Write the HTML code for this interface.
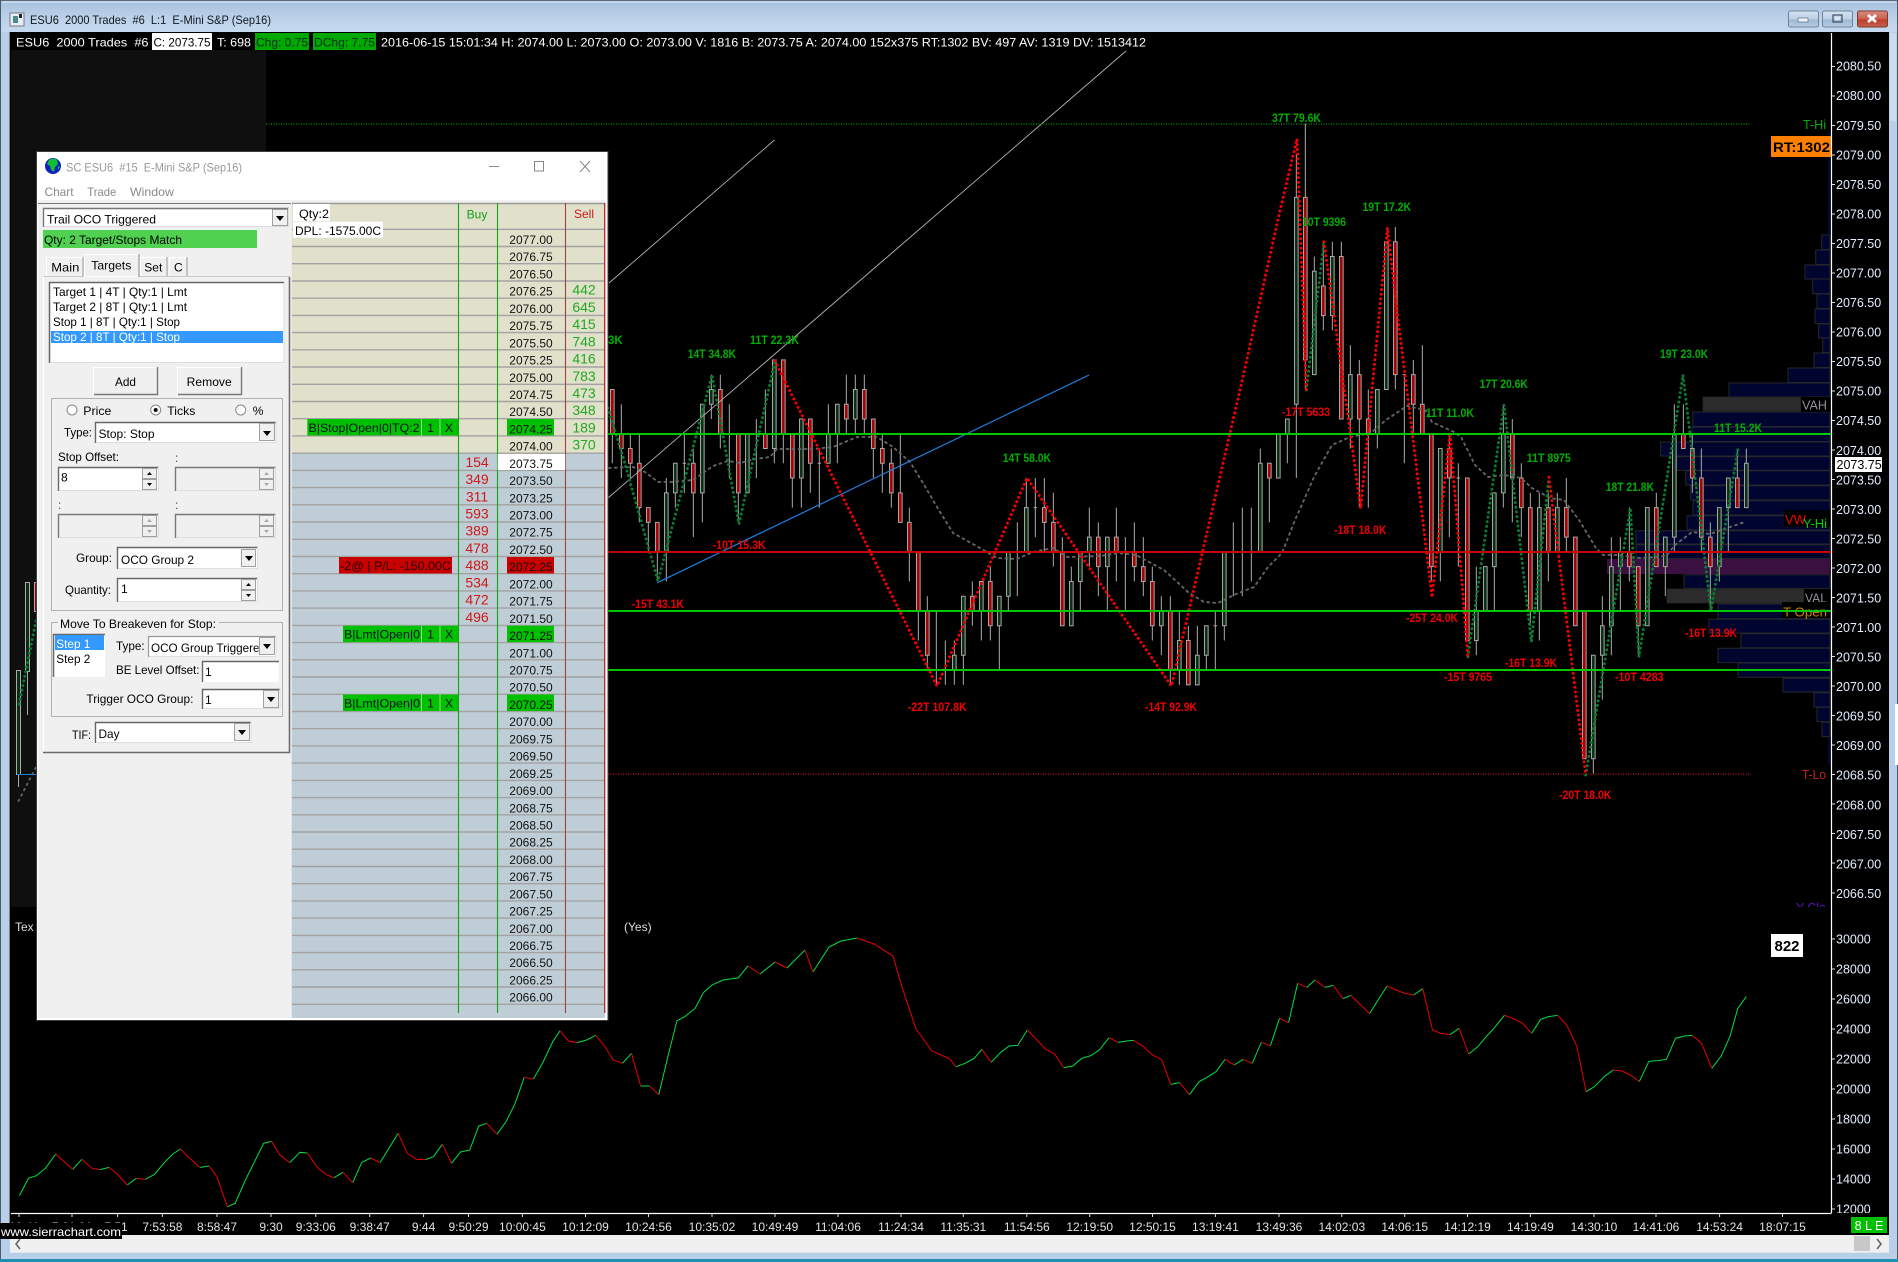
<!DOCTYPE html>
<html><head><meta charset="utf-8"><title>ESU6 2000 Trades</title>
<style>
html,body{margin:0;padding:0;background:#000;overflow:hidden}
svg{display:block}
text{font-family:"Liberation Sans",sans-serif;white-space:pre;font-size:12px}
.lb text{font-weight:bold;font-size:11.5px}
.g{fill:#00b000}.r{fill:#f00000}
.ns{vector-effect:non-scaling-stroke}
.btn{fill:#f0f0f0;stroke:#a0a0a0;stroke-width:1}
.ax text{font-size:12.5px}
.v text{font-size:14px}
.m{font-size:13px}
</style></head><body>
<svg xmlns="http://www.w3.org/2000/svg" width="1898" height="1262" viewBox="0 0 1898 1262">
<defs>
<linearGradient id="tb" x1="0" y1="0" x2="0" y2="1"><stop offset="0" stop-color="#a6c0dc"/><stop offset=".6" stop-color="#bcd2e9"/><stop offset="1" stop-color="#c6d9ee"/></linearGradient>
<linearGradient id="bt" x1="0" y1="0" x2="0" y2="1"><stop offset="0" stop-color="#d5e3f2"/><stop offset=".5" stop-color="#bcd0e6"/><stop offset=".55" stop-color="#9fb9d6"/><stop offset="1" stop-color="#b8cde4"/></linearGradient>
<linearGradient id="cl" x1="0" y1="0" x2="0" y2="1"><stop offset="0" stop-color="#dc8a7c"/><stop offset=".5" stop-color="#c8604f"/><stop offset=".55" stop-color="#b8402c"/><stop offset="1" stop-color="#c8604c"/></linearGradient>
<clipPath id="c1"><rect x="0" y="0" width="1898" height="1213"/></clipPath>
<clipPath id="c2"><rect x="1700" y="890" width="198" height="17"/></clipPath>
<clipPath id="c3"><rect x="148" y="636" width="110.5" height="20"/></clipPath>
</defs>

<!-- window frame -->
<rect width="1898" height="1262" fill="#b7cfe9"/>
<rect width="1898" height="32" fill="url(#tb)"/>
<path d="M0 .5H1898" stroke="#5a6a7c" stroke-width="1"/>
<path d="M.5 0V1262" stroke="#4a5a6c" stroke-width="1"/>
<path d="M1897.5 0V1262" stroke="#4a5a6c" stroke-width="1"/>
<path d="M2 2H1896" stroke="#e0ebf6" stroke-width="1"/>
<rect x="1890" y="33" width="6" height="88" fill="#cbdcef"/>
<rect x="1895" y="704" width="3" height="61" fill="#fff"/>
<rect x="0" y="1259" width="1898" height="3" fill="#1f8fb0"/>
<!-- title -->
<rect x="10" y="13" width="14" height="13" fill="#e8eef4" stroke="#778" stroke-width="1"/><rect x="13" y="16" width="5" height="7" fill="#4a8a8a"/><rect x="19" y="14" width="3" height="4" fill="#223"/>
<text x="30" y="24" textLength="241" lengthAdjust="spacingAndGlyphs" fill="#101820">ESU6  2000 Trades  #6  L:1  E-Mini S&amp;P (Sep16)</text>
<rect x="1788.5" y="11" width="30" height="16" rx="2" fill="url(#bt)" stroke="#6f8299"/>
<rect x="1822.5" y="11" width="30" height="16" rx="2" fill="url(#bt)" stroke="#6f8299"/>
<rect x="1857.5" y="11" width="30" height="16" rx="2" fill="url(#cl)" stroke="#7a3a30"/>
<rect x="1798" y="18" width="10" height="4" fill="#eef3f9" stroke="#5a6c80" stroke-width=".7"/>
<rect x="1833" y="15" width="9" height="7" fill="none" stroke="#3e4e60" stroke-width="1.2"/><rect x="1835" y="17" width="5" height="3" fill="#dde8f3"/>
<path d="M1868 15l8 7M1876 15l-8 7" stroke="#fff" stroke-width="2.8"/>

<!-- chart base -->
<rect x="9" y="32" width="1880" height="1203" fill="#000"/>
<path d="M9.5 32V1235" stroke="#ffffff" stroke-width="1" opacity=".5"/>
<rect x="11" y="50" width="255" height="857" fill="#0f0f0f"/>

<!-- volume profile -->
<rect x="1828" y="132" width="2" height="103" fill="#000a3a"/>
<g fill="#00052f" stroke="#26262e" stroke-width="1">
<path d="M1821.7 235H1830V249.5H1821.7zM1815.7 250H1830V264.5H1815.7zM1805 265H1830V279H1805zM1812.7 279H1830V293.5H1812.7zM1817 294H1830V308.5H1817zM1815 309H1830V323.5H1815zM1818.7 324H1830V338H1818.7zM1822.7 338H1830V352.5H1822.7zM1814 353H1830V367.5H1814zM1788 368H1830V382.5H1788zM1729 383H1830V397H1729zM1692.7 412H1830V426.5H1692.7zM1692 427H1830V441.5H1692zM1660.7 442H1830V456H1660.7zM1676.7 456.7H1830V470.2H1676.7zM1685.7 470.7H1830V485H1685.7zM1690.7 485.7H1830V500H1690.7zM1693 500.7H1830V515H1693zM1687 515.7H1830V530H1687zM1636 530.7H1830V544H1636zM1636 544.7H1830V558.6H1636zM1684 574.7H1830V588.4H1684zM1718 604H1830V618.7H1718zM1709 619.3H1830V633H1709zM1741 633.7H1830V647.7H1741zM1718 648.3H1830V662.6H1718zM1738 663H1830V677.3H1738zM1783 678.3H1830V692H1783zM1814 692.7H1830V707H1814zM1817 707.3H1830V721.6H1817zM1822 722.3H1830V736.6H1822z"/>
</g>
<rect x="1828" y="737" width="2" height="28" fill="#000a3a"/>
<rect x="1607" y="559" width="223" height="15" fill="#3a1040"/>
<rect x="1703" y="397" width="98" height="14" fill="#2c2c2c" stroke="#222"/>
<rect x="1667" y="589" width="137" height="14" fill="#2c2c2c" stroke="#222"/>

<!-- left strip candles -->
<path d="M27.5 671V715M18.5 774V787" stroke="#aaa" stroke-width="1"/>
<rect x="25.5" y="582.5" width="4" height="89" fill="#0a2e12" stroke="#aaa"/>
<rect x="16.5" y="670.5" width="4" height="104" fill="#0a2e12" stroke="#aaa"/>
<rect x="34.5" y="582.5" width="4" height="29" fill="#a00000" stroke="#aaa"/>
<path d="M36 621L19 705" stroke="#0a7a30" stroke-width="3" stroke-dasharray=".1 4.6" stroke-linecap="round"/>
<path d="M36 767L18 802" stroke="#666" stroke-width="1.8" stroke-dasharray="3 3"/>
<path d="M17 774.5H37" stroke="#1e7fe0" stroke-width="1"/>

<!-- candles: x=i, y=tick -->
<g transform="translate(612.33 64.5) scale(9 14.77)" fill="none">
<path class="ns" stroke="#aaa" stroke-width="1" d="M0 22V27M1 23V28M2 25V28M3 25V31M4 30V33M5 31V35M6 28V35M7 27V30M8 25V29M7.8 27H8.2M9 26V32M10 23V31M11 21V24M12 21V26M13 23V28M14 25V31M15 25V29M16 24V28M17 22V26M18 20V27M19 20V27M20 25V30M21 24V30M22 24V29M23 26V30M22.8 27H23.2M24 23V27M25 23V27M26 21V25M27 21V25M28 21V25M29 24V28M30 25V29M31 26V30M32 25V31M33 30V35M34 33V39M35 36V41M36 37V42M37 39V42M38 39V42M39 36V42M40 35V38M41 35V39M42 34V39M43 36V41M44 33V37M45 31V36M46 28V33M47 28V32M46.8 30H47.2M48 28V33M49 29V34M50 32V38M51 34V38M52 33V37M53 30V34M54 31V36M55 32V37M56 30V35M57 32V37M58 31V35M59 32V36M60 34V39M61 36V40M62 36V42M63 37V42M64 38V42M65 38V42M66 38V41M67 37V41M66.8 38H67.2M68 33V39M69 31V36M70 30V36M71 30V35M72 26V33M73 27V31M74 25V28M75 24V27M76 6V28M77 4V22M78 13V21M79 12V18M80 12V18M81 12V24M82 19V26M83 20V30M84 22V30M85 22V26M86 12V22M87 11V22M88 21V27M87.8 21H88.2M89 20V25M90 19V25M91 25V35M92 26V35M93 25V32M94 27V34M93.8 28H94.2M95 28V39M96 34V40M97 34V37M98 29V37M99 23V30M100 24V31M101 27V32M102 29V38M103 29V39M104 29V35M105 29V33M106 28V33M107 32V38M108 37V47M109 40V48M110 36V43M111 32V40M112 32V37M113 30V35M114 34V40M115 30V38M116 29V34M117 32V36M118 23V33M119 23V26M120 25V29M121 26V33M122 31V37M123 30V35M124 28V33M125 26V30M126 26V30"/>
<path class="ns" stroke="#aaa" stroke-width="1" fill="#a80000" d="M-.2 22h.4V25h-.4zM.8 25h.4V26h-.4zM1.8 26h.4V27h-.4zM2.8 27h.4V30h-.4zM3.8 30h.4V31h-.4zM4.8 31h.4V33h-.4zM8.8 27h.4V29h-.4zM11.8 22h.4V25h-.4zM13.8 25h.4V29h-.4zM16.8 25h.4V26h-.4zM18.8 20h.4V25h-.4zM19.8 25h.4V28h-.4zM21.8 24h.4V27h-.4zM25.8 23h.4V24h-.4zM27.8 22h.4V24h-.4zM28.8 24h.4V26h-.4zM29.8 26h.4V27h-.4zM30.8 27h.4V29h-.4zM31.8 29h.4V31h-.4zM32.8 31h.4V33h-.4zM33.8 33h.4V37h-.4zM34.8 37h.4V40h-.4zM39.8 36h.4V37h-.4zM41.8 35h.4V38h-.4zM47.8 30h.4V31h-.4zM48.8 31h.4V33h-.4zM49.8 33h.4V38h-.4zM53.8 32h.4V34h-.4zM55.8 32h.4V33h-.4zM57.8 33h.4V34h-.4zM58.8 34h.4V35h-.4zM59.8 35h.4V38h-.4zM61.8 37h.4V41h-.4zM63.8 39h.4V42h-.4zM72.8 27h.4V28h-.4zM76.8 9h.4V20h-.4zM78.8 15h.4V17h-.4zM80.8 13h.4V24h-.4zM82.8 21h.4V24h-.4zM83.8 24h.4V25h-.4zM86.8 12h.4V21h-.4zM88.8 21h.4V23h-.4zM89.8 23h.4V25h-.4zM90.8 25h.4V34h-.4zM92.8 26h.4V28h-.4zM94.8 28h.4V39h-.4zM99.8 25h.4V28h-.4zM100.8 28h.4V30h-.4zM101.8 30h.4V37h-.4zM103.8 30h.4V33h-.4zM105.8 30h.4V32h-.4zM106.8 32h.4V38h-.4zM107.8 37h.4V47h-.4zM112.8 33h.4V34h-.4zM113.8 34h.4V38h-.4zM115.8 30h.4V34h-.4zM118.8 25h.4V26h-.4zM119.8 26h.4V28h-.4zM120.8 28h.4V32h-.4zM121.8 32h.4V34h-.4zM124.8 28h.4V30h-.4z"/>
<path class="ns" stroke="#aaa" stroke-width="1" fill="#0a2e12" d="M5.8 29h.4V33h-.4zM6.8 27h.4V29h-.4zM9.8 23h.4V29h-.4zM10.8 22h.4V23h-.4zM14.8 25h.4V29h-.4zM17.8 20h.4V26h-.4zM20.8 24h.4V28h-.4zM23.8 25h.4V27h-.4zM24.8 23h.4V25h-.4zM26.8 22h.4V24h-.4zM37.8 40h.4V41h-.4zM38.8 36h.4V40h-.4zM40.8 35h.4V37h-.4zM42.8 36h.4V38h-.4zM43.8 33h.4V36h-.4zM45.8 30h.4V33h-.4zM50.8 35h.4V38h-.4zM51.8 33h.4V35h-.4zM52.8 32h.4V33h-.4zM54.8 32h.4V34h-.4zM60.8 37h.4V38h-.4zM62.8 39h.4V41h-.4zM64.8 40h.4V42h-.4zM65.8 38h.4V40h-.4zM67.8 33h.4V38h-.4zM71.8 27h.4V33h-.4zM73.8 25h.4V28h-.4zM74.8 24h.4V25h-.4zM75.8 9h.4V23h-.4zM77.8 14h.4V21h-.4zM79.8 13h.4V17h-.4zM81.8 21h.4V24h-.4zM84.8 22h.4V25h-.4zM85.8 12h.4V22h-.4zM91.8 26h.4V33h-.4zM95.8 37h.4V39h-.4zM96.8 34h.4V37h-.4zM97.8 29h.4V34h-.4zM98.8 25h.4V29h-.4zM102.8 30h.4V37h-.4zM104.8 30h.4V33h-.4zM108.8 40h.4V47h-.4zM109.8 38h.4V40h-.4zM110.8 34h.4V38h-.4zM111.8 33h.4V34h-.4zM114.8 30h.4V38h-.4zM116.8 32h.4V34h-.4zM117.8 25h.4V32h-.4zM122.8 30h.4V34h-.4zM123.8 28h.4V30h-.4zM125.8 27h.4V30h-.4z"/>
</g>

<!-- MA grey dashed -->
<path fill="none" stroke="#666" stroke-width="1.8" stroke-dasharray="3.5 2.5" d="M608 468L633 467 645 472 658 482 672 482 693 480 703 473 713 466 728 461 740 463 755 459 770 457 777 449 793 449 813 449 833 447 857 437 877 437 893 447 910 462 923 483 937 507 953 533 980 548 997 558 1017 559 1033 552 1053 548 1067 557 1100 556 1118 553 1136 555 1164 570 1175 580 1189 593 1204 602 1218 603 1236 594 1254 587 1268 567 1282 553 1295 520 1304 500 1314 477 1332 445 1350 437 1371 433 1386 420 1407 406 1425 410 1432 422 1454 432 1461 437 1475 465 1488 477 1504 475 1521 478 1532 488 1550 498 1564 500 1579 520 1596 548 1603 555 1618 555 1636 558 1659 557 1667 555 1675 545 1692 532 1710 534 1727 528 1745 522"/>

<!-- trend lines -->
<path d="M609 283L774.5 140M608 498L1126 51" stroke="#b4b4b4" stroke-width=".9" fill="none"/>
<path d="M657.3 582.7L1089 375" stroke="#1e7fe0" stroke-width="1.2" fill="none"/>

<!-- zigzags -->
<path fill="none" stroke="#0a7a30" stroke-width="3" stroke-dasharray=".1 4.6" stroke-linecap="round" d="M608 408L623 457 658 581 712 375 739 524 775 361M1306.4 390L1324 241.7M1467.9 656.7L1504 405 1531.4 641.7 1549 477.3M1585.7 775L1630.4 508.3 1639 656.7 1683 375 1711 610.7 1738 449.3"/>
<path fill="none" stroke="#f00000" stroke-width="3" stroke-dasharray=".1 4.6" stroke-linecap="round" d="M775 361L937 686 1027 478 1171.4 686 1210.7 516.7 1243 377 1278.6 216.7 1297 139 1305.4 366.7 1306.4 390M1324 241.7L1360.7 508.3 1387.5 227.7 1395.7 300 1414 446.7 1432 597.3 1450 433 1467.9 656.7M1549 477.3L1585.7 775"/>

<!-- horizontal lines -->
<path d="M266 124H1751" stroke="#00c000" stroke-width="1" stroke-dasharray="1 1.5"/>
<path d="M608 774H1751" stroke="#f02020" stroke-width="1" stroke-dasharray="1 1.5"/>
<path d="M266 434H1831M266 611H1831M266 670H1831" stroke="#00c800" stroke-width="2"/>
<path d="M266 552H1831" stroke="#c80000" stroke-width="2"/>

<!-- chart labels -->
<g class="lb">
<text class="g" x="1272" y="122" textLength="49" lengthAdjust="spacingAndGlyphs">37T 79.6K</text>
<text class="g" x="1302" y="226" textLength="44" lengthAdjust="spacingAndGlyphs">10T 9396</text>
<text class="g" x="1362.5" y="211" textLength="48.5" lengthAdjust="spacingAndGlyphs">19T 17.2K</text>
<text class="g" x="1479.6" y="388" textLength="48.3" lengthAdjust="spacingAndGlyphs">17T 20.6K</text>
<text class="g" x="1425.7" y="417" textLength="48.3" lengthAdjust="spacingAndGlyphs">11T 11.0K</text>
<text class="g" x="1526.8" y="462" textLength="44" lengthAdjust="spacingAndGlyphs">11T 8975</text>
<text class="g" x="1605.7" y="491" textLength="48.3" lengthAdjust="spacingAndGlyphs">18T 21.8K</text>
<text class="g" x="1660" y="358" textLength="48" lengthAdjust="spacingAndGlyphs">19T 23.0K</text>
<text class="g" x="1714" y="432" textLength="48" lengthAdjust="spacingAndGlyphs">11T 15.2K</text>
<text class="g" x="687.7" y="358" textLength="48.3" lengthAdjust="spacingAndGlyphs">14T 34.8K</text>
<text class="g" x="750" y="344" textLength="49" lengthAdjust="spacingAndGlyphs">11T 22.3K</text>
<text class="g" x="1002.7" y="462" textLength="48.3" lengthAdjust="spacingAndGlyphs">14T 58.0K</text>
<text class="g" x="608" y="344">3K</text>
<text class="r" x="631.7" y="608" textLength="52.3" lengthAdjust="spacingAndGlyphs">-15T 43.1K</text>
<text class="r" x="712.7" y="549" textLength="53" lengthAdjust="spacingAndGlyphs">-10T 15.3K</text>
<text class="r" x="907.7" y="711" textLength="59" lengthAdjust="spacingAndGlyphs">-22T 107.8K</text>
<text class="r" x="1282" y="416" textLength="48" lengthAdjust="spacingAndGlyphs">-17T 5633</text>
<text class="r" x="1334" y="534" textLength="52.4" lengthAdjust="spacingAndGlyphs">-18T 18.0K</text>
<text class="r" x="1406" y="622" textLength="52" lengthAdjust="spacingAndGlyphs">-25T 24.0K</text>
<text class="r" x="1505" y="667" textLength="52" lengthAdjust="spacingAndGlyphs">-16T 13.9K</text>
<text class="r" x="1444" y="681" textLength="48" lengthAdjust="spacingAndGlyphs">-15T 9765</text>
<text class="r" x="1615" y="681" textLength="48.6" lengthAdjust="spacingAndGlyphs">-10T 4283</text>
<text class="r" x="1145" y="711" textLength="52" lengthAdjust="spacingAndGlyphs">-14T 92.9K</text>
<text class="r" x="1559" y="799" textLength="52.4" lengthAdjust="spacingAndGlyphs">-20T 18.0K</text>
<text class="r" x="1685" y="637" textLength="52" lengthAdjust="spacingAndGlyphs">-16T 13.9K</text>
</g>

<!-- right overlay labels -->
<text class="m" x="1803" y="129" fill="#00b000" textLength="23" lengthAdjust="spacingAndGlyphs">T-Hi</text>
<rect x="1771" y="136" width="60" height="21" fill="#ff8000"/>
<text x="1773" y="152" style="font-weight:bold;font-size:14px" fill="#000" textLength="57" lengthAdjust="spacingAndGlyphs">RT:1302</text>
<rect x="1801" y="397" width="29" height="15" fill="#000"/>
<text class="m" x="1802" y="409.5" fill="#909098" textLength="25" lengthAdjust="spacingAndGlyphs">VAH</text>
<rect x="1804" y="589" width="26" height="15" fill="#000"/>
<text class="m" x="1805" y="602.5" fill="#909098" textLength="22" lengthAdjust="spacingAndGlyphs">VAL</text>
<rect x="1784" y="510" width="46" height="17" fill="#000"/>
<text class="m" x="1785" y="524" fill="#f00000">VW</text>
<text class="m" x="1803" y="528" fill="#00d000" textLength="24" lengthAdjust="spacingAndGlyphs">Y-Hi</text>
<rect x="1782" y="602" width="48" height="8" fill="#000"/><rect x="1782" y="612" width="48" height="6" fill="#000"/>
<text class="m" x="1783" y="616.5" fill="#d08000" textLength="44" lengthAdjust="spacingAndGlyphs">T Open</text>
<path d="M1782 611H1831" stroke="#00c800" stroke-width="2"/>
<text class="m" x="1802" y="779" fill="#c82020" textLength="24" lengthAdjust="spacingAndGlyphs">T-Lo</text>
<g clip-path="url(#c2)"><text class="m" x="1796" y="912" fill="#5a10d0" textLength="30" lengthAdjust="spacingAndGlyphs">Y-Clo</text></g>

<!-- lower pane indicator -->
<text x="15" y="931" fill="#ddd">Tex</text>
<text x="624" y="931" fill="#ddd">(Yes)</text>
<g fill="none" stroke-width="1" transform="translate(0 1000) scale(.60606 .33333)">
<path class="ns" stroke="#00e040" d="M32 587L47 535 60 527 75 505 92 462M120 508L135 478M165 509L180 502M210 555L225 535M240 538L255 523 270 490 285 462 298 447M330 502L345 498M375 620L388 610 405 540 435 430 448 424M478 488L495 457 507 459M551 533L566 517M582 548L597 487 612 474M627 488L657 400M702 479L715 470 730 433M745 490L760 456 775 450 790 378 803 370M820 403L835 365 850 310 865 232M880 237L895 190 912 125 924 92M952 128L968 120 983 106M1027 190L1042 160M1057 258L1072 258M1087 284L1102 170 1117 62 1130 50 1147 25 1160 -20"/>
<path class="ns" stroke="#e80000" d="M92 462L120 508M135 478L152 505 165 509M180 502L195 525 210 555M225 535L240 538M298 447L310 470 330 502M345 498L358 530 375 620M448 424L462 465 478 488M507 459L525 505 540 525 551 533M566 517L582 548M612 474L627 488M657 400L672 460 687 478 702 479M730 433L745 490M803 370L820 403M865 232L880 237M924 92L938 123 952 128M983 106L998 140 1012 180 1027 190M1042 160L1057 258M1072 258L1087 284"/>
</g>
<path fill="none" stroke="#00e040" stroke-width="1" d="M703 993L712 985 723 980 738 978 748 966M760 974L775 962M787 968L805 950M813 972L829 947 841 941 857 938"/>
<path fill="none" stroke="#e80000" stroke-width="1" d="M748 966L760 974M775 962L787 968M805 950L813 972M857 938L874 944 893 956 902 987 916 1029 932 1051 950 1059"/>
<g fill="none" stroke-width="1" transform="translate(950 900) scale(.6046 .33333)">
<path class="ns" stroke="#00e040" d="M10 500L25 490 40 475 53 448M68 487L85 455 98 438 112 436 128 390M188 503L203 498 218 475 233 467 247 450 263 413M278 427L292 423 304 421M365 553L380 548M396 584L412 545 425 532 440 515 455 478M470 495L485 478M500 490L515 427M530 437L545 355M560 368L575 250M590 262L604 240M620 262L634 256M650 296L663 286M694 341L708 300 723 258M767 285L782 266M827 404L842 385M858 462L873 440 887 410 902 380 917 346M962 400L977 358 990 350 1005 346M1052 575L1066 560 1082 530 1097 510M1140 545L1156 484 1170 482 1185 478 1200 415 1215 408 1228 406M1260 505L1275 470 1290 410 1303 325 1317 290"/>
<path class="ns" stroke="#e80000" d="M0 478L10 500M53 448L68 487M128 390L158 447 173 462 188 503M263 413L278 427M304 421L320 440 335 465 350 478 365 553M380 548L396 584M455 478L470 495M485 478L500 490M515 427L530 437M545 355L560 368M575 250L590 262M604 240L620 262M634 256L650 296M663 286L694 341M723 258L738 270 752 280 767 285M782 266L798 390 812 400 827 404M842 385L858 462M917 346L932 356 947 370 962 400M1005 346L1020 375 1037 440 1052 575M1097 510L1112 513 1127 527 1140 545M1228 406L1243 430 1260 505"/>
</g>
<rect x="1771" y="934" width="32" height="23" fill="#fff"/>
<text x="1787" y="951" text-anchor="middle" style="font-weight:bold;font-size:15px" fill="#000">822</text>

<!-- info bar -->
<rect x="10" y="32" width="1822" height="18" fill="#000"/>
<text x="16" y="46.5" fill="#fff" textLength="132.5" lengthAdjust="spacingAndGlyphs">ESU6  2000 Trades  #6</text>
<rect x="152" y="33" width="60" height="17" fill="#fff"/>
<text x="153.5" y="46.5" fill="#000" textLength="57" lengthAdjust="spacingAndGlyphs">C: 2073.75</text>
<text x="217" y="46.5" fill="#fff" textLength="34" lengthAdjust="spacingAndGlyphs">T: 698</text>
<rect x="255" y="33" width="54" height="17" fill="#00a800"/>
<text x="256" y="46.5" fill="#032" textLength="52" lengthAdjust="spacingAndGlyphs">Chg: 0.75</text>
<rect x="313" y="33" width="63" height="17" fill="#00a800"/>
<text x="314" y="46.5" fill="#032" textLength="61" lengthAdjust="spacingAndGlyphs">DChg: 7.75</text>
<text x="381" y="46.5" fill="#fff" textLength="765" lengthAdjust="spacingAndGlyphs">2016-06-15 15:01:34 H: 2074.00 L: 2073.00 O: 2073.00 V: 1816 B: 2073.75 A: 2074.00 152x375 RT:1302 BV: 497 AV: 1319 DV: 1513412</text>

<!-- price axis -->
<path d="M1831.5 33V1213" stroke="#fff" stroke-width="1.2"/>
<path d="M1832 66.5h3M1832 96h3M1832 125.5h3M1832 155h3M1832 184.5h3M1832 214h3M1832 243.5h3M1832 273h3M1832 302.5h3M1832 332h3M1832 361.5h3M1832 391h3M1832 420.5h3M1832 450h3M1832 479.5h3M1832 509h3M1832 538.5h3M1832 568h3M1832 597.5h3M1832 627h3M1832 656.5h3M1832 686h3M1832 715.5h3M1832 745h3M1832 774.5h3M1832 804h3M1832 833.5h3M1832 863h3M1832 893h3M1832 939h3M1832 969h3M1832 999h3M1832 1029h3M1832 1059h3M1832 1089h3M1832 1119h3M1832 1149h3M1832 1179h3M1832 1209h3" stroke="#ddd" stroke-width="1"/>
<g class="ax" fill="#e4eeff">
<text x="1836" y="70.7">2080.50</text><text x="1836" y="100.2">2080.00</text><text x="1836" y="129.8">2079.50</text><text x="1836" y="159.3">2079.00</text><text x="1836" y="188.9">2078.50</text><text x="1836" y="218.4">2078.00</text><text x="1836" y="248">2077.50</text><text x="1836" y="277.5">2077.00</text><text x="1836" y="307">2076.50</text><text x="1836" y="336.6">2076.00</text><text x="1836" y="366.1">2075.50</text><text x="1836" y="395.7">2075.00</text><text x="1836" y="425.2">2074.50</text><text x="1836" y="454.8">2074.00</text><text x="1836" y="484.3">2073.50</text><text x="1836" y="513.8">2073.00</text><text x="1836" y="543.4">2072.50</text><text x="1836" y="572.9">2072.00</text><text x="1836" y="602.5">2071.50</text><text x="1836" y="632">2071.00</text><text x="1836" y="661.6">2070.50</text><text x="1836" y="691.1">2070.00</text><text x="1836" y="720.6">2069.50</text><text x="1836" y="750.2">2069.00</text><text x="1836" y="779.7">2068.50</text><text x="1836" y="809.3">2068.00</text><text x="1836" y="838.8">2067.50</text><text x="1836" y="868.4">2067.00</text><text x="1836" y="897.9">2066.50</text>
<text x="1836" y="943.7">30000</text><text x="1836" y="973.7">28000</text><text x="1836" y="1003.7">26000</text><text x="1836" y="1033.7">24000</text><text x="1836" y="1063.7">22000</text><text x="1836" y="1093.7">20000</text><text x="1836" y="1123.7">18000</text><text x="1836" y="1153.7">16000</text><text x="1836" y="1183.7">14000</text>
<g clip-path="url(#c1)"><text x="1836" y="1213.7">12000</text></g>
</g>
<rect x="1835" y="457" width="47" height="15" fill="#fff"/>
<text x="1836.5" y="469" style="font-size:12.5px" fill="#000">2073.75</text>

<!-- time axis -->
<path d="M11 1213.5H1831.5" stroke="#fff" stroke-width="1.2"/>
<path d="M19 1214v3M72 1214v3M117.6 1214v3M162.4 1214v3M217 1214v3M271 1214v3M315.8 1214v3M369.7 1214v3M423.6 1214v3M468.5 1214v3M522.4 1214v3M585.5 1214v3M648.5 1214v3M712 1214v3M775 1214v3M838 1214v3M901 1214v3M963.3 1214v3M1026.8 1214v3M1089.7 1214v3M1152.5 1214v3M1215.4 1214v3M1279 1214v3M1341.8 1214v3M1404.7 1214v3M1467.5 1214v3M1530.4 1214v3M1594 1214v3M1656 1214v3M1719.6 1214v3M1782.5 1214v3" stroke="#ddd" stroke-width="1"/>
<g fill="#e2e2e2" text-anchor="middle">
<text x="24" y="1231">10:41</text><text x="72" y="1231">7:01:01</text><text x="116" y="1231">7:51</text>
<text x="162.4" y="1231">7:53:58</text><text x="217" y="1231">8:58:47</text><text x="271" y="1231">9:30</text><text x="315.8" y="1231">9:33:06</text><text x="369.7" y="1231">9:38:47</text><text x="423.6" y="1231">9:44</text><text x="468.5" y="1231">9:50:29</text><text x="522.4" y="1231">10:00:45</text><text x="585.5" y="1231">10:12:09</text><text x="648.5" y="1231">10:24:56</text><text x="712" y="1231">10:35:02</text><text x="775" y="1231">10:49:49</text><text x="838" y="1231">11:04:06</text><text x="901" y="1231">11:24:34</text><text x="963.3" y="1231">11:35:31</text><text x="1026.8" y="1231">11:54:56</text><text x="1089.7" y="1231">12:19:50</text><text x="1152.5" y="1231">12:50:15</text><text x="1215.4" y="1231">13:19:41</text><text x="1279" y="1231">13:49:36</text><text x="1341.8" y="1231">14:02:03</text><text x="1404.7" y="1231">14:06:15</text><text x="1467.5" y="1231">14:12:19</text><text x="1530.4" y="1231">14:19:49</text><text x="1594" y="1231">14:30:10</text><text x="1656" y="1231">14:41:06</text><text x="1719.6" y="1231">14:53:24</text><text x="1782.5" y="1231">18:07:15</text>
</g>
<rect x="1851" y="1217" width="36" height="16" fill="#00c000"/>
<text x="1869" y="1230" text-anchor="middle" fill="#fff" style="font-size:12.5px">8 L E</text>
<!-- scrollbar -->
<rect x="10" y="1235" width="1879" height="17" fill="#f0f0f0"/>
<path d="M10 1252.5H1889" stroke="#dfe6ee" stroke-width="1"/>
<rect x="1854" y="1236" width="16" height="15" fill="#c8c8c8"/>
<path d="M20 1239l-4 5 4 5M1877 1239l4 5-4 5" fill="none" stroke="#666" stroke-width="1.6"/>
<rect x="0" y="1223" width="122" height="16" fill="#000"/>
<text x="1" y="1236" fill="#fff" textLength="120" lengthAdjust="spacingAndGlyphs">www.sierrachart.com</text>

<!-- DIALOG -->
<rect x="37" y="152" width="571" height="868" fill="#fff"/>
<path d="M37 151.5H608M36.5 151V1021M36.5 1020.5H608.5M608 151V1021" fill="none" stroke="#3c3c3c" stroke-width="1"/>
<circle cx="53" cy="166" r="8" fill="#1020c0"/><path d="M49 160q5-3 8 0l1 4-3 3-1 5-3-2-1-4-3-2zM58 166l2 1-2 3z" fill="#10c030"/>
<text x="66" y="171.5" fill="#9a9a9a" textLength="176" lengthAdjust="spacingAndGlyphs">SC ESU6  #15  E-Mini S&amp;P (Sep16)</text>
<path d="M489 166.5H499" stroke="#888" stroke-width="1"/>
<rect x="534.5" y="161.5" width="9" height="9.5" fill="none" stroke="#888"/>
<path d="M580 161l10 11M590 161l-10 11" stroke="#888" stroke-width="1" fill="none"/>
<g fill="#8a8a8a"><text x="44.5" y="196" textLength="29" lengthAdjust="spacingAndGlyphs">Chart</text><text x="87.3" y="196" textLength="29" lengthAdjust="spacingAndGlyphs">Trade</text><text x="130" y="196" textLength="44" lengthAdjust="spacingAndGlyphs">Window</text></g>
<rect x="38" y="200" width="567" height="3" fill="#f0f0f0"/>
<!-- left panel -->
<rect x="38" y="203" width="254" height="815" fill="#f0f0f0"/>
<path d="M38 203.5H291" stroke="#777" stroke-width="1"/>

<!-- combo 1 -->
<rect x="43" y="208" width="246" height="19" fill="#fff"/>
<path d="M43.5 227V208.5H289" fill="none" stroke="#777" stroke-width="1.4"/><path d="M44 226.5H288.5V208" fill="none" stroke="#ddd"/>
<rect class="btn" x="272.5" y="209.5" width="15" height="16"/><path d="M276 216h8l-4 5z" fill="#000"/>
<text x="47" y="223.5" fill="#000" textLength="109" lengthAdjust="spacingAndGlyphs">Trail OCO Triggered</text>
<rect x="43" y="230" width="214" height="18" fill="#50d250"/>
<text x="44" y="244" fill="#000" textLength="138" lengthAdjust="spacingAndGlyphs">Qty: 2 Target/Stops Match</text>

<!-- tab pane -->
<rect x="43.5" y="276.5" width="246" height="476" fill="#f0f0f0" stroke="#fff"/>
<path d="M289.5 277V752.5H43" fill="none" stroke="#6c6c6c" stroke-width="1.6"/>
<path d="M43.5 276.5H84M139 276.5H290" stroke="#c8c8c8" stroke-width="1"/>
<path d="M46.5 276V257.5H83" fill="#f0f0f0" stroke="#fff" stroke-width="1"/><path d="M83 257V276" stroke="#999"/>
<path d="M140.5 276V257.5H167" fill="#f0f0f0" stroke="#fff" stroke-width="1"/><path d="M167 257V276" stroke="#999"/>
<path d="M169.5 276V257.5H187" fill="#f0f0f0" stroke="#fff" stroke-width="1"/><path d="M187 257V276" stroke="#999"/>
<path d="M84.5 277V254.5H139" fill="#f0f0f0" stroke="#fff" stroke-width="1"/><path d="M139 254V277" stroke="#888"/>
<text x="51.3" y="271.5" textLength="28" lengthAdjust="spacingAndGlyphs">Main</text>
<text x="91.3" y="269.5" textLength="40" lengthAdjust="spacingAndGlyphs">Targets</text>
<text x="144.3" y="271.5" textLength="18" lengthAdjust="spacingAndGlyphs">Set</text>
<text x="174" y="271.5">C</text>

<!-- listbox -->
<rect x="49" y="282" width="235" height="81" fill="#fff"/>
<path d="M49.5 363V282.5H284" fill="none" stroke="#666" stroke-width="1.5"/><path d="M50 362.5H284V283" fill="none" stroke="#ddd"/>
<rect x="51" y="331" width="232" height="12" fill="#3399ff"/>
<text x="53" y="296" textLength="134" lengthAdjust="spacingAndGlyphs">Target 1 | 4T | Qty:1 | Lmt</text>
<text x="53" y="311" textLength="134" lengthAdjust="spacingAndGlyphs">Target 2 | 8T | Qty:1 | Lmt</text>
<text x="53" y="326" textLength="127" lengthAdjust="spacingAndGlyphs">Stop 1 | 8T | Qty:1 | Stop</text>
<text x="53" y="341" fill="#fff" textLength="127" lengthAdjust="spacingAndGlyphs">Stop 2 | 8T | Qty:1 | Stop</text>

<!-- buttons -->
<path d="M93.5 395V367.5H158" fill="none" stroke="#fff"/><path d="M94 394.5H157.5V367" fill="none" stroke="#777" stroke-width="1.4"/>
<path d="M177.5 395V367.5H242" fill="none" stroke="#fff"/><path d="M178 394.5H241.5V367" fill="none" stroke="#777" stroke-width="1.4"/>
<text x="115" y="386" textLength="21" lengthAdjust="spacingAndGlyphs">Add</text>
<text x="186.7" y="386" textLength="45" lengthAdjust="spacingAndGlyphs">Remove</text>

<!-- group 1 -->
<rect x="51.5" y="398.5" width="231" height="212" fill="none" stroke="#b0b0b0"/>
<circle cx="72" cy="410" r="5" fill="#fff" stroke="#888"/>
<circle cx="155.7" cy="410" r="5" fill="#fff" stroke="#888"/><circle cx="155.7" cy="410" r="2" fill="#111"/>
<circle cx="240.7" cy="410" r="5" fill="#fff" stroke="#888"/>
<text x="83.3" y="415" textLength="28" lengthAdjust="spacingAndGlyphs">Price</text>
<text x="167.3" y="415" textLength="28" lengthAdjust="spacingAndGlyphs">Ticks</text>
<text x="252.7" y="415">%</text>
<text x="64" y="436.5" textLength="28" lengthAdjust="spacingAndGlyphs">Type:</text>
<rect x="95" y="422" width="181" height="21" fill="#fff"/>
<path d="M95.5 443V422.5H276" fill="none" stroke="#666" stroke-width="1.4"/><path d="M96 442.5H276V422" fill="none" stroke="#ddd"/>
<rect class="btn" x="259.5" y="423.5" width="15" height="17"/><path d="M263 431h8l-4 5z" fill="#000"/>
<text x="98.5" y="438" textLength="56" lengthAdjust="spacingAndGlyphs">Stop: Stop</text>
<text x="58" y="461" textLength="61" lengthAdjust="spacingAndGlyphs">Stop Offset:</text>
<text x="175" y="462" fill="#444">:</text>
<rect x="58" y="467" width="101" height="24" fill="#fff"/>
<path d="M58.5 491V467.5H159" fill="none" stroke="#666" stroke-width="1.4"/><path d="M59 490.5H158.5V467" fill="none" stroke="#ddd"/>
<rect class="btn" x="142.5" y="468.5" width="14" height="10"/><rect class="btn" x="142.5" y="479.5" width="14" height="10"/><path d="M147 475l2.5-3 2.5 3zM147 483l2.5 3 2.5-3z" fill="#000"/>
<text x="61" y="481.5">8</text>
<rect x="175" y="467" width="101" height="24" fill="#f0f0f0"/>
<path d="M175.5 491V467.5H276" fill="none" stroke="#777" stroke-width="1.4"/><path d="M176 490.5H275.5V467" fill="none" stroke="#ddd"/>
<rect class="btn" x="259.5" y="468.5" width="14" height="10"/><rect class="btn" x="259.5" y="479.5" width="14" height="10"/><path d="M264 475l2.5-3 2.5 3zM264 483l2.5 3 2.5-3z" fill="#aaa"/>
<text x="58" y="509" fill="#444">:</text><text x="175" y="509" fill="#444">:</text>
<rect x="58" y="514" width="101" height="24" fill="#f0f0f0"/>
<path d="M58.5 538V514.5H159" fill="none" stroke="#777" stroke-width="1.4"/><path d="M59 537.5H158.5V514" fill="none" stroke="#ddd"/>
<rect class="btn" x="142.5" y="515.5" width="14" height="10"/><rect class="btn" x="142.5" y="526.5" width="14" height="10"/><path d="M147 522l2.5-3 2.5 3zM147 530l2.5 3 2.5-3z" fill="#aaa"/>
<rect x="175" y="514" width="101" height="24" fill="#f0f0f0"/>
<path d="M175.5 538V514.5H276" fill="none" stroke="#777" stroke-width="1.4"/><path d="M176 537.5H275.5V514" fill="none" stroke="#ddd"/>
<rect class="btn" x="259.5" y="515.5" width="14" height="10"/><rect class="btn" x="259.5" y="526.5" width="14" height="10"/><path d="M264 522l2.5-3 2.5 3zM264 530l2.5 3 2.5-3z" fill="#aaa"/>
<text x="76" y="562" textLength="36" lengthAdjust="spacingAndGlyphs">Group:</text>
<rect x="117" y="547" width="141" height="22" fill="#fff"/>
<path d="M117.5 569V547.5H258" fill="none" stroke="#666" stroke-width="1.4"/><path d="M118 568.5H257.5V547" fill="none" stroke="#ddd"/>
<rect class="btn" x="241.5" y="549.5" width="14" height="17"/><path d="M245 556h8l-4 5z" fill="#000"/>
<text x="121" y="564" textLength="73" lengthAdjust="spacingAndGlyphs">OCO Group 2</text>
<text x="65" y="594" textLength="46" lengthAdjust="spacingAndGlyphs">Quantity:</text>
<rect x="117" y="578" width="141" height="24" fill="#fff"/>
<path d="M117.5 602V578.5H258" fill="none" stroke="#666" stroke-width="1.4"/><path d="M118 601.5H257.5V578" fill="none" stroke="#ddd"/>
<rect class="btn" x="241.5" y="579.5" width="14" height="10"/><rect class="btn" x="241.5" y="590.5" width="14" height="10"/><path d="M246 586l2.5-3 2.5 3zM246 594l2.5 3 2.5-3z" fill="#000"/>
<text x="121" y="593">1</text>

<!-- group 2 -->
<rect x="51.5" y="622.5" width="231" height="94" fill="none" stroke="#b0b0b0"/>
<rect x="58" y="618" width="161" height="12" fill="#f0f0f0"/>
<text x="60" y="628" textLength="156" lengthAdjust="spacingAndGlyphs">Move To Breakeven for Stop:</text>
<rect x="53" y="634" width="52" height="43" fill="#fff"/>
<path d="M53.5 677V634.5H105" fill="none" stroke="#666" stroke-width="1.5"/>
<rect x="55" y="635" width="49" height="15" fill="#3399ff"/>
<text x="56.3" y="648" fill="#fff" textLength="34" lengthAdjust="spacingAndGlyphs">Step 1</text>
<text x="56.3" y="663" textLength="34" lengthAdjust="spacingAndGlyphs">Step 2</text>
<text x="116" y="650" textLength="28.6" lengthAdjust="spacingAndGlyphs">Type:</text>
<rect x="148" y="636" width="128" height="21" fill="#fff"/>
<path d="M148.5 657V636.5H276" fill="none" stroke="#999" stroke-width="1.2"/><path d="M149 656.5H276V636" fill="none" stroke="#ddd"/>
<g clip-path="url(#c3)"><text x="151" y="652" textLength="115" lengthAdjust="spacingAndGlyphs">OCO Group Triggered</text></g>
<rect class="btn" x="259.5" y="637.5" width="15" height="17"/><path d="M263 644h8l-4 5z" fill="#000"/>
<text x="116" y="674" textLength="83.5" lengthAdjust="spacingAndGlyphs">BE Level Offset:</text>
<rect x="202" y="661" width="77" height="21" fill="#fff"/>
<path d="M202.5 682V661.5H279" fill="none" stroke="#666" stroke-width="1.4"/>
<text x="205" y="676">1</text>
<text x="86.4" y="703" textLength="107" lengthAdjust="spacingAndGlyphs">Trigger OCO Group:</text>
<rect x="202" y="689" width="78" height="20" fill="#fff"/>
<path d="M202.5 709V689.5H280" fill="none" stroke="#666" stroke-width="1.4"/><path d="M203 708.5H280V689" fill="none" stroke="#ddd"/>
<rect class="btn" x="263.5" y="690.5" width="15" height="17"/><path d="M267 697h8l-4 5z" fill="#000"/>
<text x="205" y="704">1</text>
<text x="72" y="739" textLength="19" lengthAdjust="spacingAndGlyphs">TIF:</text>
<rect x="95" y="722" width="156" height="21" fill="#fff"/>
<path d="M95.5 743V722.5H251" fill="none" stroke="#666" stroke-width="1.4"/><path d="M96 742.5H251V722" fill="none" stroke="#ddd"/>
<rect class="btn" x="234.5" y="723.5" width="15" height="17"/><path d="M238 730h8l-4 5z" fill="#000"/>
<text x="98.5" y="738" textLength="21" lengthAdjust="spacingAndGlyphs">Day</text>

<!-- DOM grid -->
<rect x="291.7" y="203" width="313.3" height="250" fill="#e1e1cb"/>
<rect x="291.7" y="453" width="313.3" height="565" fill="#bfced6"/>
<path d="M292 203.5H605" stroke="#999" stroke-width="1.4"/>
<path fill="none" stroke="#a2a2a2" stroke-width="1.4" d="M292 229.3H605M292 246.5H605M292 263.7H605M292 281H605M292 298.2H605M292 315.4H605M292 332.6H605M292 349.8H605M292 367H605M292 384.3H605M292 401.5H605M292 418.7H605M292 435.9H605M292 453.2H605M292 470.4H605M292 487.6H605M292 504.8H605M292 522H605M292 539.3H605M292 556.5H605M292 573.7H605M292 590.9H605M292 608.1H605M292 625.4H605M292 642.6H605M292 659.8H605M292 677H605M292 694.3H605M292 711.5H605M292 728.7H605M292 745.9H605M292 763.1H605M292 780.4H605M292 797.6H605M292 814.8H605M292 832H605M292 849.2H605M292 866.5H605M292 883.7H605M292 900.9H605M292 918.1H605M292 935.4H605M292 952.6H605M292 969.8H605M292 987H605M292 1004.3H605"/>
<path d="M458.5 203V1013M497.5 203V1013" stroke="#10a810" stroke-width="1.1"/>
<path d="M565.5 203V1013" stroke="#a04040" stroke-width="1.1"/>
<path d="M604.7 203V1013" stroke="#c82020" stroke-width="1.3"/>
<rect x="497.7" y="454" width="67.5" height="16" fill="#fff"/>
<rect x="293" y="204" width="37" height="17" fill="#fff"/><rect x="293" y="221.7" width="90" height="16" fill="#fff"/>
<text x="299" y="218" textLength="30" lengthAdjust="spacingAndGlyphs">Qty:2</text>
<text x="295" y="235" textLength="86" lengthAdjust="spacingAndGlyphs">DPL: -1575.00C</text>
<text x="477" y="218.5" text-anchor="middle" fill="#10a010">Buy</text>
<text x="584" y="218" text-anchor="middle" fill="#c81818">Sell</text>

<!-- orders -->
<rect x="307.3" y="419" width="150.7" height="16.5" fill="#00c000"/>
<rect x="507" y="419" width="47" height="16.5" fill="#00c000"/>
<path d="M421.5 419v16.5M440 419v16.5" stroke="#8fdf8f" stroke-width="1"/>
<text x="308.5" y="432" fill="#012" textLength="111" lengthAdjust="spacingAndGlyphs">B|Stop|Open|0|TQ:2</text>
<text x="430.5" y="432" text-anchor="middle" fill="#012">1</text><text x="449" y="432" text-anchor="middle" fill="#012">X</text>
<rect x="339" y="557" width="113" height="16.5" fill="#c80000"/>
<rect x="507" y="557" width="47" height="16.5" fill="#c80000"/>
<text x="340" y="570" fill="#200" textLength="111" lengthAdjust="spacingAndGlyphs">-2@ | P/L: -150.00C</text>
<rect x="343" y="625.7" width="115" height="16.5" fill="#00c000"/>
<rect x="507" y="625.7" width="47" height="16.5" fill="#00c000"/>
<path d="M421.5 625.7v16.5M440 625.7v16.5" stroke="#8fdf8f" stroke-width="1"/>
<text x="344" y="638.5" fill="#012" textLength="76" lengthAdjust="spacingAndGlyphs">B|Lmt|Open|0</text>
<text x="430.5" y="638.5" text-anchor="middle" fill="#012">1</text><text x="449" y="638.5" text-anchor="middle" fill="#012">X</text>
<rect x="343" y="694.5" width="115" height="16.5" fill="#00c000"/>
<rect x="507" y="694.5" width="47" height="16.5" fill="#00c000"/>
<path d="M421.5 694.5v16.5M440 694.5v16.5" stroke="#8fdf8f" stroke-width="1"/>
<text x="344" y="707.5" fill="#012" textLength="76" lengthAdjust="spacingAndGlyphs">B|Lmt|Open|0</text>
<text x="430.5" y="707.5" text-anchor="middle" fill="#012">1</text><text x="449" y="707.5" text-anchor="middle" fill="#012">X</text>

<!-- prices -->
<g text-anchor="middle" fill="#111">
<text x="531" y="244">2077.00</text><text x="531" y="261.2">2076.75</text><text x="531" y="278.4">2076.50</text><text x="531" y="295.7">2076.25</text><text x="531" y="312.9">2076.00</text><text x="531" y="330.1">2075.75</text><text x="531" y="347.3">2075.50</text><text x="531" y="364.5">2075.25</text><text x="531" y="381.8">2075.00</text><text x="531" y="399">2074.75</text><text x="531" y="416.2">2074.50</text><text x="531" y="433.4">2074.25</text><text x="531" y="450.6">2074.00</text><text x="531" y="467.9">2073.75</text><text x="531" y="485.1">2073.50</text><text x="531" y="502.3">2073.25</text><text x="531" y="519.5">2073.00</text><text x="531" y="536.7">2072.75</text><text x="531" y="554">2072.50</text><text x="531" y="571.2">2072.25</text><text x="531" y="588.4">2072.00</text><text x="531" y="605.6">2071.75</text><text x="531" y="622.8">2071.50</text><text x="531" y="640.1">2071.25</text><text x="531" y="657.3">2071.00</text><text x="531" y="674.5">2070.75</text><text x="531" y="691.7">2070.50</text><text x="531" y="708.9">2070.25</text><text x="531" y="726.2">2070.00</text><text x="531" y="743.4">2069.75</text><text x="531" y="760.6">2069.50</text><text x="531" y="777.8">2069.25</text><text x="531" y="795">2069.00</text><text x="531" y="812.3">2068.75</text><text x="531" y="829.5">2068.50</text><text x="531" y="846.7">2068.25</text><text x="531" y="863.9">2068.00</text><text x="531" y="881.1">2067.75</text><text x="531" y="898.4">2067.50</text><text x="531" y="915.6">2067.25</text><text x="531" y="932.8">2067.00</text><text x="531" y="950">2066.75</text><text x="531" y="967.2">2066.50</text><text x="531" y="984.5">2066.25</text><text x="531" y="1001.7">2066.00</text>
</g>
<g class="v" text-anchor="middle" fill="#22a822">
<text x="584" y="294.7">442</text><text x="584" y="311.9">645</text><text x="584" y="329.1">415</text><text x="584" y="346.3">748</text><text x="584" y="363.5">416</text><text x="584" y="380.8">783</text><text x="584" y="398">473</text><text x="584" y="415.2">348</text><text x="584" y="432.4">189</text><text x="584" y="449.6">370</text>
</g>
<g class="v" text-anchor="middle" fill="#d01818">
<text x="477" y="466.9">154</text><text x="477" y="484.1">349</text><text x="477" y="501.3">311</text><text x="477" y="518.5">593</text><text x="477" y="535.7">389</text><text x="477" y="553">478</text><text x="477" y="570.2">488</text><text x="477" y="587.4">534</text><text x="477" y="604.6">472</text><text x="477" y="621.8">496</text>
</g>
</svg>
</body></html>
